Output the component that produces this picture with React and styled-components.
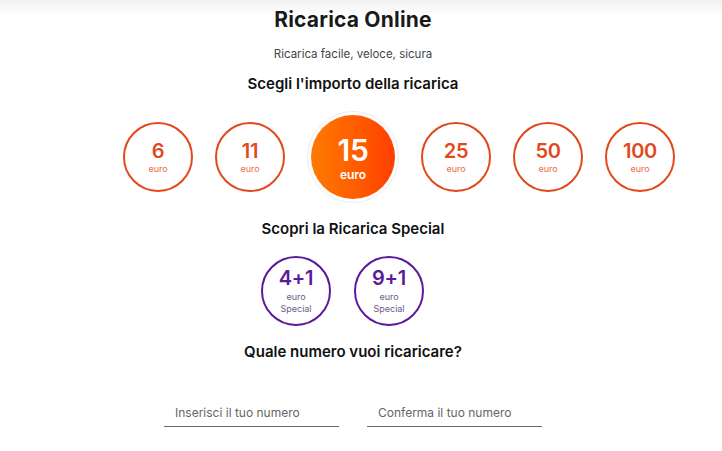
import React from "react";
import styled, { createGlobalStyle } from "styled-components";

const Global = createGlobalStyle`
  html, body { margin: 0; padding: 0; background: #fff; }
  body {
    font-family: "Inter", "Open Sans", sans-serif;
    color: #1a1a1a;
    background: linear-gradient(to bottom, #f1f1f1 0px, #fff 16px) no-repeat;
  }
`;

const Page = styled.div`
  display: flex;
  flex-direction: column;
  align-items: center;
  width: 706px;
  min-height: 451px;
`;

const Title = styled.h1`
  margin: 8px 0 0;
  font-size: 21px;
  line-height: 24px;
  font-weight: 700;
  letter-spacing: 0.2px;
  color: #1a1a1a;
`;

const Subtitle = styled.p`
  margin: 14px 0 0;
  font-size: 11.5px;
  line-height: 16px;
  color: #444;
`;

const Heading = styled.h2`
  margin: ${(p) => p.$top}px 0 0;
  font-size: 15px;
  line-height: 20px;
  font-weight: 600;
  color: #111;
`;

const Row = styled.div`
  display: flex;
  align-items: center;
  align-self: flex-start;
  gap: ${(p) => p.$gap}px;
  margin-top: ${(p) => p.$top}px;
  margin-left: ${(p) => p.$left}px;
  height: ${(p) => p.$h}px;
`;

const Circle = styled.div`
  box-sizing: border-box;
  width: 70px;
  height: 70px;
  border-radius: 50%;
  border: 2px solid ${(p) => p.$color};
  display: flex;
  flex-direction: column;
  align-items: center;
  justify-content: center;
  color: ${(p) => p.$color};
`;

const Selected = styled.div`
  box-sizing: border-box;
  width: 92px;
  height: 92px;
  border-radius: 50%;
  border: 1px solid #ececec;
  background: #fff;
  padding: 3px;
  display: flex;
`;

const SelectedInner = styled.div`
  flex: 1;
  border-radius: 50%;
  background: linear-gradient(90deg, #ff7a00 0%, #ff5c00 55%, #ff3e00 100%);
  color: #fff;
  display: flex;
  flex-direction: column;
  align-items: center;
  justify-content: center;
`;

const Amount = styled.span`
  font-size: ${(p) => p.$size || 20}px;
  line-height: ${(p) => p.$lh || 22}px;
  font-weight: 600;
  letter-spacing: -0.3px;
`;

const Unit = styled.span`
  font-size: ${(p) => p.$size || 9}px;
  line-height: ${(p) => p.$lh || 12}px;
  font-weight: ${(p) => p.$weight || 400};
  color: ${(p) => p.$color || "inherit"};
  margin-top: ${(p) => p.$top || 0}px;
`;

const Inputs = styled.div`
  display: flex;
  gap: 28px;
  margin-top: 41px;
`;

const Field = styled.input`
  box-sizing: border-box;
  width: 175px;
  height: 24px;
  border: none;
  border-bottom: 1px solid #6a6a6a;
  padding: 0 11px 4px;
  font-family: "Inter", "Open Sans", sans-serif;
  font-size: 12px;
  outline: none;
  background: transparent;
  &::placeholder { color: #666; }
`;

const amounts = [6, 11, 15, 25, 50, 100];
const ORANGE = "#e1491c";
const PURPLE = "#5b1a9b";

export default function App() {
  return (
    <>
      <Global />
      <Page>
        <Title>Ricarica Online</Title>
        <Subtitle>Ricarica facile, veloce, sicura</Subtitle>
        <Heading $top={12}>Scegli l'importo della ricarica</Heading>
        <Row $gap={22} $top={17} $left={123} $h={92}>
          {amounts.map((a) =>
            a === 15 ? (
              <Selected key={a}>
                <SelectedInner>
                  <Amount $size={30} $lh={36}>{a}</Amount>
                  <Unit $size={12} $lh={14} $weight={600}>euro</Unit>
                </SelectedInner>
              </Selected>
            ) : (
              <Circle key={a} $color={ORANGE}>
                <Amount>{a}</Amount>
                <Unit $color="#ec6a44" $top={1}>euro</Unit>
              </Circle>
            )
          )}
        </Row>
        <Heading $top={16}>Scopri la Ricarica Special</Heading>
        <Row $gap={23} $top={16} $left={261} $h={72}>
          {["4+1", "9+1"].map((s) => (
            <Circle key={s} $color={PURPLE}>
              <Amount>{s}</Amount>
              <Unit $color="#6e5a8a" $top={2}>euro</Unit>
              <Unit $color="#6e5a8a">Special</Unit>
            </Circle>
          ))}
        </Row>
        <Heading $top={15}>Quale numero vuoi ricaricare?</Heading>
        <Inputs>
          <Field placeholder="Inserisci il tuo numero" />
          <Field placeholder="Conferma il tuo numero" />
        </Inputs>
      </Page>
    </>
  );
}
